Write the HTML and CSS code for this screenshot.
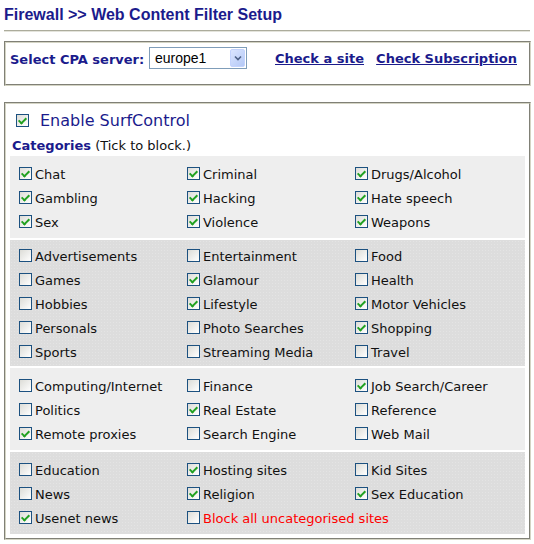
FILE: index.html
```html
<!DOCTYPE html>
<html lang="en">

<head>
    <meta charset="UTF-8">
    <title>Web Content Filter Setup</title>
    <link rel="stylesheet" href="styles.css">
</head>

<body>
    <h1 class="page-title">Firewall &gt;&gt; Web Content Filter Setup</h1>
    <hr class="rule">

    <!-- server selection -->
    <div class="frame server-bar">
        <span class="server-label">Select CPA server:</span>
        <div class="fake-select">
            <span class="fake-select-value">europe1</span>
            <span class="fake-select-btn">
                <svg width="8" height="6" viewBox="0 0 8 6"><path d="M1 1.5 L4 4.5 L7 1.5" fill="none" stroke="#4d6185" stroke-width="1.6"/></svg>
            </span>
        </div>
        <a class="bar-link first" href="#">Check a site</a>
        <a class="bar-link last" href="#">Check Subscription</a>
    </div>

    <!-- categories -->
    <form class="frame filter">
        <label class="enable">
            <input class="cb" type="checkbox" checked>
            <span>Enable SurfControl</span>
        </label>
        <div class="cat-head"><b>Categories</b> (Tick to block.)</div>

        <div class="group light">
            <label class="item"><input class="cb" type="checkbox" checked>Chat</label>
            <label class="item"><input class="cb" type="checkbox" checked>Criminal</label>
            <label class="item"><input class="cb" type="checkbox" checked>Drugs/Alcohol</label>
            <label class="item"><input class="cb" type="checkbox" checked>Gambling</label>
            <label class="item"><input class="cb" type="checkbox" checked>Hacking</label>
            <label class="item"><input class="cb" type="checkbox" checked>Hate speech</label>
            <label class="item"><input class="cb" type="checkbox" checked>Sex</label>
            <label class="item"><input class="cb" type="checkbox" checked>Violence</label>
            <label class="item"><input class="cb" type="checkbox" checked>Weapons</label>
        </div>

        <div class="group dark tall">
            <label class="item"><input class="cb" type="checkbox">Advertisements</label>
            <label class="item"><input class="cb" type="checkbox">Entertainment</label>
            <label class="item"><input class="cb" type="checkbox">Food</label>
            <label class="item"><input class="cb" type="checkbox">Games</label>
            <label class="item"><input class="cb" type="checkbox" checked>Glamour</label>
            <label class="item"><input class="cb" type="checkbox">Health</label>
            <label class="item"><input class="cb" type="checkbox">Hobbies</label>
            <label class="item"><input class="cb" type="checkbox" checked>Lifestyle</label>
            <label class="item"><input class="cb" type="checkbox" checked>Motor Vehicles</label>
            <label class="item"><input class="cb" type="checkbox">Personals</label>
            <label class="item"><input class="cb" type="checkbox">Photo Searches</label>
            <label class="item"><input class="cb" type="checkbox" checked>Shopping</label>
            <label class="item"><input class="cb" type="checkbox">Sports</label>
            <label class="item"><input class="cb" type="checkbox">Streaming Media</label>
            <label class="item"><input class="cb" type="checkbox">Travel</label>
        </div>

        <div class="group light">
            <label class="item"><input class="cb" type="checkbox">Computing/Internet</label>
            <label class="item"><input class="cb" type="checkbox">Finance</label>
            <label class="item"><input class="cb" type="checkbox" checked>Job Search/Career</label>
            <label class="item"><input class="cb" type="checkbox">Politics</label>
            <label class="item"><input class="cb" type="checkbox" checked>Real Estate</label>
            <label class="item"><input class="cb" type="checkbox">Reference</label>
            <label class="item"><input class="cb" type="checkbox" checked>Remote proxies</label>
            <label class="item"><input class="cb" type="checkbox">Search Engine</label>
            <label class="item"><input class="cb" type="checkbox">Web Mail</label>
        </div>

        <div class="group dark">
            <label class="item"><input class="cb" type="checkbox">Education</label>
            <label class="item"><input class="cb" type="checkbox" checked>Hosting sites</label>
            <label class="item"><input class="cb" type="checkbox">Kid Sites</label>
            <label class="item"><input class="cb" type="checkbox">News</label>
            <label class="item"><input class="cb" type="checkbox" checked>Religion</label>
            <label class="item"><input class="cb" type="checkbox" checked>Sex Education</label>
            <label class="item"><input class="cb" type="checkbox" checked>Usenet news</label>
            <label class="item warn"><input class="cb" type="checkbox">Block all uncategorised sites</label>
        </div>
    </form>
</body>

</html>
```

FILE: styles.css
```css
/* General styling */
body {
    margin: 0;
    padding: 4px;
    background-color: white;
    font-family: "DejaVu Sans", Verdana, sans-serif;
    font-size: 13px;
    color: #111;
}

.page-title {
    margin: 0;
    font-family: "Liberation Sans", Arial, sans-serif;
    font-size: 16px;
    line-height: 22px;
    font-weight: bold;
    color: #1b1b8c;
}

.rule {
    margin: 4px 0 0 0;
    width: 526px;
    border: none;
    border-top: 1px solid #acac9c;
    border-bottom: 1px solid #e4e4dc;
}

/* boxes with a grooved frame */
.frame {
    box-sizing: border-box;
    width: 527px;
    border: 2px groove #d4d4c4;
}

.server-bar {
    display: flex;
    align-items: flex-start;
    height: 45px;
    margin-top: 9px;
    padding: 4px 12px 0 4px;
}

.server-label {
    width: 139px;
    line-height: 22px;
    padding-top: 2px;
    font-weight: bold;
    color: #1b1b8c;
}

.fake-select {
    display: flex;
    align-items: center;
    box-sizing: border-box;
    width: 98px;
    height: 22px;
    padding: 1px;
    border: 1px solid #7f9db9;
    background-color: white;
}

.fake-select-value {
    flex: 1;
    padding-left: 4px;
    font-family: "Liberation Sans", Arial, sans-serif;
    font-size: 14px;
    color: #000;
}

.fake-select-btn {
    display: flex;
    align-items: center;
    justify-content: center;
    width: 15px;
    height: 18px;
    box-sizing: border-box;
    border: 1px solid #c3d3fd;
    border-radius: 2px;
    background: linear-gradient(135deg, #dbe6ff, #b4c8f6);
}

.bar-link {
    line-height: 22px;
    padding-top: 1px;
    font-weight: bold;
    color: #1b1b8c;
}

.bar-link.first {
    margin-left: 28px;
}

.bar-link.last {
    margin-left: auto;
}

.filter {
    margin: 16px 0 0 0;
    padding: 4px;
}

.enable {
    display: flex;
    align-items: center;
    gap: 11px;
    height: 24px;
    padding-left: 6px;
    font-size: 16px;
    color: #1b1b8c;
}

.cat-head {
    padding: 3px 0 0 2px;
    line-height: 21px;
}

.cat-head b {
    color: #1b1b8c;
}

.group {
    display: grid;
    grid-template-columns: repeat(3, 168px);
    grid-auto-rows: 24px;
    padding: 5px 0 5px 9px;
    margin-bottom: 2px;
}

.group:last-child {
    margin-bottom: 0;
}

.group.tall {
    padding: 3px 0 3px 9px;
}

.group.light {
    background-color: #eeeeee;
}

.group.dark {
    background-color: #dddddd;
    background-image: radial-gradient(#e4e4e4 0.6px, transparent 0.8px);
    background-size: 3px 3px;
}

.item {
    display: flex;
    align-items: center;
    gap: 3px;
    box-sizing: border-box;
    padding-top: 2px;
    white-space: nowrap;
}

.item .cb {
    margin-bottom: 2px;
}

.item.warn {
    color: #ff0000;
}

/* XP style check boxes */
.cb {
    appearance: none;
    position: relative;
    flex: none;
    width: 13px;
    height: 13px;
    margin: 0;
    border: 1px solid #1c5180;
    background: linear-gradient(135deg, #dcdcd7, #ffffff);
}

.cb:checked::after {
    content: "";
    position: absolute;
    left: 3px;
    top: 1px;
    width: 3px;
    height: 6px;
    border: solid #21a121;
    border-width: 0 2px 2px 0;
    transform: rotate(45deg);
}
```
